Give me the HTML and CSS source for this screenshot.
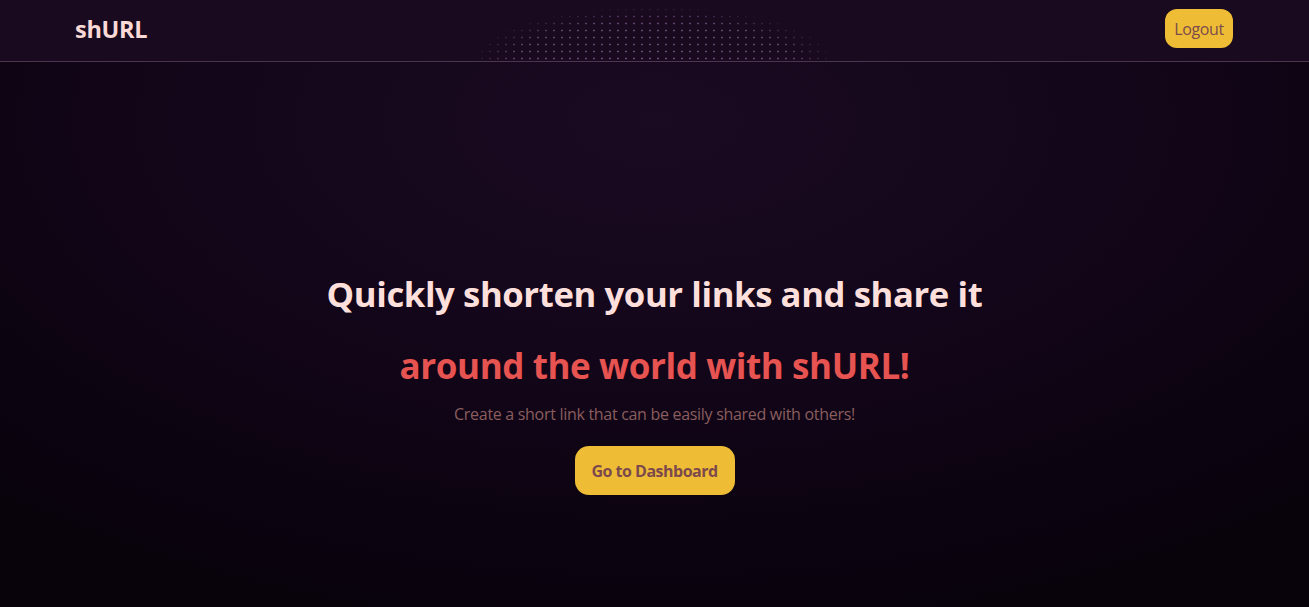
FILE: index.html
```html
<!DOCTYPE html>
<html lang="en">
<head>
<meta charset="utf-8">
<title>shURL</title>
<link rel="stylesheet" href="styles.css">
</head>
<body>
<div class="page">
  <header class="topbar">
    <div class="dots" aria-hidden="true"></div>
    <a class="brand" href="#">shURL</a>
    <button class="logout" type="button">Logout</button>
  </header>
  <main class="hero">
    <h1 class="title">Quickly shorten your links and share it</h1>
    <h2 class="title accent">around the world with shURL!</h2>
    <p class="sub">Create a short link that can be easily shared with others!</p>
    <button class="cta" type="button">Go to Dashboard</button>
  </main>
</div>
</body>
</html>
```

FILE: styles.css
```css
* { box-sizing: border-box; }
html, body { margin: 0; height: 100%; }
body {
  font-family: "Open Sans", "Noto Sans", sans-serif;
  background: #0a0310;
}
.page {
  min-height: 607px;
  background: radial-gradient(ellipse 75% 85% at 50% 20%, #1a0a22 0%, #13061a 45%, #08020b 100%);
  display: flex;
  flex-direction: column;
}
.topbar {
  position: relative;
  height: 62px;
  display: flex;
  align-items: center;
  justify-content: space-between;
  padding: 0 76px 4px 75px;
  background: #190a1f;
  border-bottom: 1px solid #4a3450;
}
.dots {
  position: absolute;
  left: 470px;
  width: 366px;
  top: 6px;
  height: 55px;
  background-image: radial-gradient(circle, #7a5888 0.8px, transparent 1.2px);
  background-size: 8px 7px;
  -webkit-mask-image: radial-gradient(ellipse 50% 100% at 50% 100%, #000 0%, rgba(0,0,0,0.85) 75%, transparent 100%);
  mask-image: radial-gradient(ellipse 50% 100% at 50% 100%, #000 0%, rgba(0,0,0,0.85) 75%, transparent 100%);
  opacity: 0.9;
}
.brand {
  position: relative;
  color: #fbd9d6;
  font-weight: 700;
  font-size: 23.5px;
  text-decoration: none;
  letter-spacing: -0.3px;
}
.logout {
  position: relative;
  font-family: inherit;
  background: #eebd35;
  color: #7c4a4c;
  border: none;
  border-radius: 12px;
  height: 39px;
  width: 68px;
  font-size: 16px;
  padding: 0;
  letter-spacing: -0.4px;
}
.hero {
  flex: 1;
  display: flex;
  flex-direction: column;
  align-items: center;
  padding-top: 209px;
  text-align: center;
}
.title {
  margin: 0;
  font-size: 34.7px;
  font-weight: 700;
  color: #fddfdb;
  line-height: 46px;
  letter-spacing: -0.4px;
}
.accent {
  color: #e65350;
  margin-top: 26px;
  font-size: 35px;
}
.sub {
  margin: 14px 0 0;
  font-size: 16px;
  color: #8a5e5e;
  letter-spacing: -0.3px;
}
.cta {
  margin-top: 21px;
  font-family: inherit;
  background: #eebd35;
  color: #7c4a4c;
  border: none;
  border-radius: 14px;
  width: 160px;
  height: 49px;
  font-size: 16px;
  font-weight: 700;
  padding: 0;
  letter-spacing: -0.5px;
}
```
